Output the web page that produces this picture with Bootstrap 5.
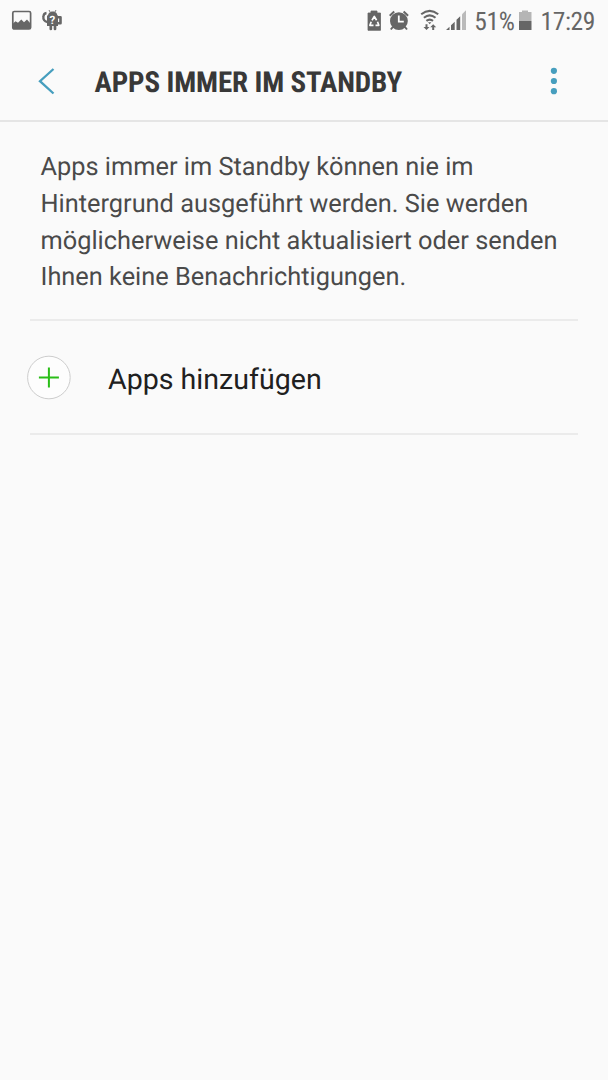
<!DOCTYPE html>
<html lang="de">
<head>
<meta charset="utf-8">
<meta name="viewport" content="width=device-width, initial-scale=1">
<title>Apps immer im Standby</title>
<link href="https://cdn.jsdelivr.net/npm/bootstrap@5.3.0/dist/css/bootstrap.min.css" rel="stylesheet">
<style>
body{background:#fafafa;font-family:Roboto,"Liberation Sans",sans-serif;min-height:100vh;overflow-x:hidden;text-rendering:geometricPrecision}
svg{display:block;flex:none}
.status{height:42px;color:#666;padding:0 13px 0 10px}
.condensed{font-family:"Roboto Condensed",Roboto,sans-serif;font-stretch:75%;white-space:nowrap}
.status .condensed{font-size:25.5px;line-height:42px;padding-top:1px;letter-spacing:-.35px}
.status .battery-text{margin-left:4.5px}
.appbar{height:80px;border-bottom:2px solid #e5e5e5}
.appbar .btn{--bs-btn-color:#469ebe;--bs-btn-hover-color:#469ebe;border:0}
.heading{font-size:29px;line-height:40px;padding-top:3px;font-weight:700;color:#383838;letter-spacing:-.13px}
.intro{font-size:25.35px;line-height:36.6px;color:#4a4a4a;padding:27.400px 0 23.200px 10.500px;white-space:nowrap}
.section{margin:0 30px}
.rule{border-bottom:2px solid #ebebeb}
.add-row{height:114px;padding-top:2px}
.add-icon{margin-left:-4px}
.add-label{font-size:28.6px;line-height:40px;color:#202020;margin-left:37px;padding-top:2px}
</style>
</head>
<body>
<header>
  <div class="status d-flex align-items-center justify-content-between">
    <div class="d-flex align-items-center">
      <svg width="56" height="42" viewBox="0 0 56 42">
        <rect x="2.800" y="11.500" width="17.800" height="17.500" rx="1.500" fill="none" stroke="#666" stroke-width="1.700"/>
        <path d="M3 23.500l2.500-2.300 2.500 1.500 3.300-3.200 2.700 2.700 3-2.700 3.500 4V29H3z" fill="#666"/>
        <path d="M37.800 16.800c0-3.600 2.400-5.300 5-5.300s4.700 1.700 4.700 5.300z" fill="#666"/>
        <path d="M39 10l1.300 2.500M46 10l-1.300 2.500" stroke="#777" stroke-width="1"/>
        <path d="M37 15.500h11V26H37z" fill="#666"/>
        <path d="M37.500 22c-3-.5-4.500-2.500-4.100-5.500.2-2 1.200-3.300 3.100-3.500" fill="none" stroke="#666" stroke-width="2.300"/>
        <path d="M47.500 17.300h3v6h-3" fill="none" stroke="#666" stroke-width="2.600" stroke-linejoin="round"/>
        <path d="M40.800 24v5M45 24v5" stroke="#666" stroke-width="2.700" stroke-linecap="round"/>
        <text x="42.400" y="24" font-size="11.500" font-weight="700" text-anchor="middle" fill="#fff">?</text>
      </svg>
    </div>
    <div class="d-flex align-items-center">
      <svg width="109" height="42" viewBox="360 0 109 42">
        <path d="M367 13h3v-2h6v2h3.500v17.300H367z" fill="#666" stroke="#666" stroke-width=".8" stroke-linejoin="round"/>
        <path d="M371 20.200l2.300-3.700 2.300 3.700M376.500 21.800l1.300 3.500h-3.300M372.500 25.300h-3.600l1.300-3.500" fill="none" stroke="#fff" stroke-width="1.700" stroke-linejoin="round"/>
        <circle cx="397.900" cy="21.100" r="8.900" fill="#666"/>
        <path d="M388.700 15.700l4.500-4.200M407.100 15.700l-4.500-4.200M391.800 27l-2 2.500M404 27l2 2.500" stroke="#666" stroke-width="2"/>
        <path d="M397.800 15.500v6.100h5" fill="none" stroke="#fff" stroke-width="1.800"/>
        <path d="M420.200 14.200q8.500-6.800 17 0M422.900 17.700q5.800-4.600 11.600 0M425.400 20.900q3.300-2.700 6.600 0" fill="none" stroke="#666" stroke-width="2.100"/>
        <path d="M427 22.200h3.400l-1.700 2zM424.500 24.300h2v2.700h2l-3 3-3-3h2zM431.200 30h2v-2.700h2l-3-3-3 3h2z" fill="#666"/>
        <path d="M445 30l3.500-3.300V30zM450 25.200l3.700-3.500V30H450zM455.500 19.800l3.700-3.500V30h-3.700z" fill="#666"/>
        <path d="M461 14.300l4-4V30h-4z" fill="#bababa"/>
      </svg>
      <span class="condensed battery-text">51%</span>
      <svg width="26" height="42" viewBox="514 0 26 42">
        <path d="M519 12h3v-1.500h6V12h3.500v9H519z" fill="#b5b5b5"/><path d="M519 21h12.500v9H519z" fill="#666"/>
      </svg>
      <span class="condensed">17:29</span>
    </div>
  </div>
  <nav class="appbar d-flex align-items-center">
    <button class="btn p-0" type="button" aria-label="Zurück">
      <svg width="94.500" height="78" viewBox="0 42 94.500 78"><path d="M53.500 69L40 81.200 53.500 93.500" fill="none" stroke="currentColor" stroke-width="2.300"/></svg>
    </button>
    <h1 class="heading condensed m-0">APPS IMMER IM STANDBY</h1>
    <button class="btn p-0 ms-auto" type="button" aria-label="Weitere Optionen">
      <svg width="88" height="78" viewBox="520 42 88 78" fill="currentColor"><circle cx="553.900" cy="70.800" r="3.100"/><circle cx="553.900" cy="81" r="3.100"/><circle cx="553.900" cy="91.200" r="3.100"/></svg>
    </button>
  </nav>
</header>
<main class="section">
  <p class="intro rule m-0">Apps immer im Standby können nie im<br>Hintergrund ausgeführt werden. Sie werden<br>möglicherweise nicht aktualisiert oder senden<br>Ihnen keine Benachrichtigungen.</p>
  <div class="add-row rule d-flex align-items-center">
    <svg class="add-icon" width="45" height="45" viewBox="0 0 45 45"><circle cx="22.900" cy="22.500" r="21.300" fill="#fdfdfd" stroke="#cdcdcd" stroke-width="1"/><path d="M22.900 12.500v20M12.900 22.500h20" stroke="#2abe18" stroke-width="2"/></svg>
    <span class="add-label">Apps hinzufügen</span>
  </div>
</main>
<script src="https://cdn.jsdelivr.net/npm/bootstrap@5.3.0/dist/js/bootstrap.bundle.min.js"></script>
</body>
</html>
